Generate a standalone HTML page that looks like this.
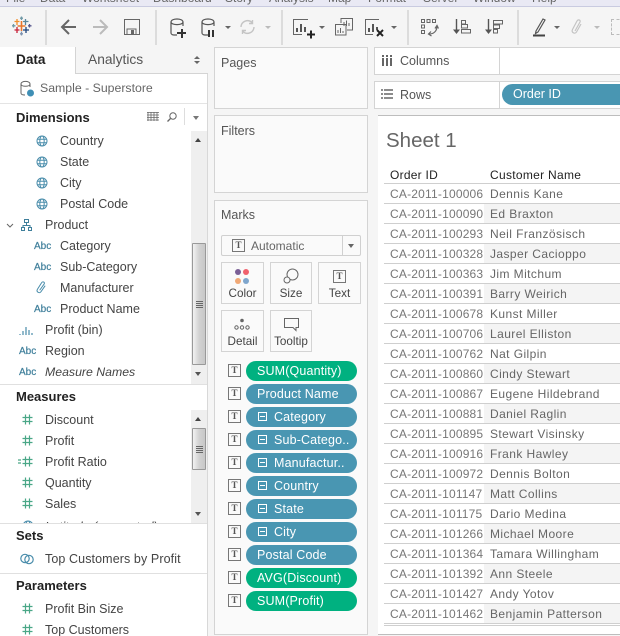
<!DOCTYPE html>
<html><head><meta charset="utf-8">
<style>
html,body{margin:0;padding:0;width:620px;height:636px;overflow:hidden;background:#f5f5f5}
body{position:relative;font-family:"Liberation Sans",sans-serif;font-size:12.5px;color:#444}
.a{position:absolute}
.t{position:absolute;white-space:nowrap;line-height:16px;height:16px}
.b{font-weight:bold;color:#222;font-size:13px}
.card{position:absolute;background:#fafafa;border:1px solid #d4d4d4;box-sizing:border-box}
.sep{position:absolute;top:10px;width:2px;height:35px;background:#dcdcdc}
.pill{position:absolute;left:246px;width:111px;height:20px;border-radius:10px;background:#4996b2;color:#fff;line-height:20px;font-size:12.5px;letter-spacing:.15px;white-space:nowrap;overflow:hidden;box-sizing:border-box;padding-left:11px}
.g{background:#00b180}
.m{padding-left:28px}
.m:before{content:"";position:absolute;left:12px;top:5px;width:9px;height:9px;border:1px solid #fff;box-sizing:border-box;background:linear-gradient(#fff,#fff) center/5px 1px no-repeat}
.tb{position:absolute;left:228px;width:13px;height:13px;border:1px solid #777;box-sizing:border-box;font:bold 9px/11px "Liberation Serif",serif;text-align:center;color:#555}
.btn{position:absolute;width:43px;height:42px;border:1px solid #d4d4d4;box-sizing:border-box;background:#fafafa}
.btn span{position:absolute;left:0;right:0;top:23px;text-align:center;font-size:11.7px;line-height:16px;color:#444}
.ln{position:absolute;left:384px;width:236px;height:1px;background:#cfcfcf}
.sh{position:absolute;left:484px;width:136px;height:19px;background:#f4f4f4}
.r{position:absolute;white-space:nowrap;font-size:12px;letter-spacing:.2px;line-height:16px;color:#777}
.n{color:#666;letter-spacing:.42px}
.abc{position:absolute;font-size:10px;color:#3f7f9b;line-height:12px;-webkit-text-stroke:.2px #3f7f9b}
.ic{position:absolute;overflow:visible}
.sb{position:absolute;left:191px;width:16px;background:#efefef}
.th{position:absolute;left:192px;width:14px;box-sizing:border-box;border:1px solid #999;border-radius:1px;background:linear-gradient(90deg,#f2f2f2,#d2d2d2 50%,#c8c8c8)}
.grip{position:absolute;left:3px;width:7px;height:1px;background:#666;box-shadow:0 2px #666,0 4px #666,0 6px #666}
.up,.dn{position:absolute;left:195px;width:0;height:0;border-left:3.5px solid transparent;border-right:3.5px solid transparent}
.up{border-bottom:4px solid #444}.dn{border-top:4px solid #555}
.car{position:absolute;width:0;height:0;border-left:3px solid transparent;border-right:3px solid transparent;border-top:3px solid #666;top:26px}
.car.off{border-top-color:#bbb}
.mn{position:absolute;top:-10px;font-size:12px;line-height:16px;color:#666;white-space:nowrap}
</style></head><body>
<svg width="0" height="0" style="position:absolute"><defs>
<symbol id="globe" viewBox="0 0 12 12"><g fill="none" stroke="#4a8dab" stroke-width="1"><circle cx="6" cy="6" r="5"/><ellipse cx="6" cy="6" rx="2.2" ry="5"/><path d="M1 4.2h10M1 7.8h10"/></g></symbol>
<symbol id="hash" viewBox="0 0 11 11"><path d="M3.5 0.5v10M7.5 0.5v10M0.5 3.5h10M0.5 7.5h10" stroke="#4aa787" stroke-width="1.2" fill="none"/></symbol>
<symbol id="db" viewBox="0 0 16 20"><path d="M1 4v11c0 1.5 2 2 3 2h3M13 4v4M1 4c0-4 12-4 12 0c0 3.500-12 3.500-12 0z" fill="none" stroke="#555" stroke-width="1.200"/></symbol>
</defs></svg>

<!-- menu -->
<div class="a" style="left:0;top:0;width:620px;height:6px;background:#e9e9f4;overflow:hidden;border-bottom:1px solid #c9cbe0">
<span class="mn" style="left:6px">File</span><span class="mn" style="left:40px">Data</span><span class="mn" style="left:82px">Worksheet</span><span class="mn" style="left:153px">Dashboard</span><span class="mn" style="left:225px">Story</span><span class="mn" style="left:269px">Analysis</span><span class="mn" style="left:328px">Map</span><span class="mn" style="left:368px">Format</span><span class="mn" style="left:423px">Server</span><span class="mn" style="left:473px">Window</span><span class="mn" style="left:532px">Help</span></div>

<!-- toolbar -->
<svg class="ic" style="left:12px;top:16px" width="20" height="20" viewBox="0 0 20 20"><g fill="none" stroke-width="1.300"><path d="M9.500 5v10M5.500 10h8" stroke="#e8762c" stroke-width="1.600"/><path d="M5 3v6M2.500 5.500h5" stroke="#f28e2b"/><path d="M13.500 3v6M11 5.500h5.500" stroke="#5b879b"/><path d="M5 11v6M2.500 14h5" stroke="#c72037"/><path d="M14 11v6M11 14h6" stroke="#1f447b"/><path d="M9.500 .5v3.500M8 2.200h3" stroke="#7099a6"/><path d="M9.500 15.500v4M8 17.800h3" stroke="#7e93b0"/><path d="M1.500 8v3.500M0 9.800h3.500" stroke="#7099a6"/><path d="M17.500 8v3.500M16 9.800h3.500" stroke="#59598f"/></g></svg>
<div class="sep" style="left:45px"></div>
<svg class="ic" style="left:60px;top:18px" width="17" height="18" viewBox="0 0 17 18"><path d="M16 9H2M9 2L2 9l7 7" fill="none" stroke="#666" stroke-width="2"/></svg>
<svg class="ic" style="left:92px;top:18px" width="17" height="18" viewBox="0 0 17 18"><path d="M1 9h14M8 2l7 7-7 7" fill="none" stroke="#bbb" stroke-width="2"/></svg>
<svg class="ic" style="left:124px;top:19px" width="16" height="16" viewBox="0 0 16 16"><path d="M.5.500h15v15H.5zM3 15V10h9v5" fill="none" stroke="#666"/><rect x="7" y="11" width="3" height="4" fill="#666"/></svg>
<div class="sep" style="left:155px"></div>
<svg class="ic" style="left:170px;top:18px" width="16" height="20"><use href="#db" width="16" height="20"/></svg><div class="a" style="left:177px;top:32px;width:9px;height:2px;background:#333"></div><div class="a" style="left:180.500px;top:28.500px;width:2px;height:9px;background:#333"></div>
<svg class="ic" style="left:201px;top:18px" width="16" height="20"><use href="#db" width="16" height="20"/></svg><div class="a" style="left:208px;top:30px;width:2px;height:7px;background:#333"></div><div class="a" style="left:212px;top:30px;width:2px;height:7px;background:#333"></div>
<div class="car" style="left:225px"></div>
<svg class="ic" style="left:239px;top:19px" width="17" height="16" viewBox="0 0 17 16"><path d="M2 8a6.500 6.500 0 0 1 11-4.500M15 8a6.500 6.500 0 0 1-11 4.500M13.500 1v3.500H10M3.500 15v-3.500H7" fill="none" stroke="#c4c4c4" stroke-width="1.400"/></svg>
<div class="car off" style="left:265px"></div>
<div class="sep" style="left:281px"></div>
<svg class="ic" style="left:293px;top:19px" width="22" height="20" viewBox="0 0 22 20"><path d="M15 .5H.5v15H9" fill="none" stroke="#666"/><path d="M4 9v4M8 5v8M12 8v5" stroke="#555" stroke-width="2"/><path d="M14 15.500h8M18 11.500v8" stroke="#222" stroke-width="2"/></svg>
<div class="car" style="left:319px"></div>
<svg class="ic" style="left:335px;top:18px" width="18" height="18" viewBox="0 0 18 18"><path d="M6 5V.5h11.500V12H12M.5 6.500H11V17H.5z" fill="none" stroke="#666"/><path d="M9 8V4M11.500 8V2.500M14 8V5M3 15v-3M5.500 15v-5M8 15v-2" stroke="#666"/></svg>
<svg class="ic" style="left:365px;top:19px" width="20" height="19" viewBox="0 0 20 19"><path d="M14 .5H.5v15H8" fill="none" stroke="#666"/><path d="M4 9v4M8 5v8M12 8v3" stroke="#555" stroke-width="2"/><path d="M12 11l6 6M18 11l-6 6" stroke="#222" stroke-width="2"/></svg>
<div class="car" style="left:391px"></div>
<div class="sep" style="left:407px"></div>
<svg class="ic" style="left:421px;top:19px" width="18" height="18" viewBox="0 0 18 18" fill="none" stroke="#666"><path d="M.5.500h3v3h-3zM6 .5h3v3H6zM11.500.5h3v3h-3zM.5 6h3v3h-3zM.5 11.500h3v3h-3z"/><path d="M16 7c0 5-3 8-8 8M10 12.500L7.500 15l3 2M14 9.500l2-3 1.500 3" stroke-width="1.200"/></svg>
<svg class="ic" style="left:453px;top:19px" width="18" height="16" viewBox="0 0 18 16"><path d="M3.500 0v13" stroke="#555" stroke-width="1.400"/><path d="M0 10.500h7l-3.500 4.500z" fill="#555"/><path d="M8.500 1.500h4v3.500h-4zM8.500 5.500h6v3.500h-6zM8.500 10.500h9v3.500h-9z" fill="none" stroke="#666"/></svg>
<svg class="ic" style="left:485px;top:19px" width="18" height="16" viewBox="0 0 18 16"><path d="M3.500 0v13" stroke="#555" stroke-width="1.400"/><path d="M0 10.500h7l-3.500 4.500z" fill="#555"/><path d="M8.500 1.500h9v3.500h-9zM8.500 6h6v3.500h-6zM8.500 10.500h4v3.500h-4z" fill="none" stroke="#666"/></svg>
<div class="sep" style="left:517px"></div>
<svg class="ic" style="left:533px;top:18px" width="14" height="19" viewBox="0 0 14 19"><path d="M3 13L10 1l2 1-7 12-2.500 1.500z" fill="none" stroke="#555" stroke-width="1.200"/><path d="M0 17.500h12" stroke="#444" stroke-width="2"/></svg>
<div class="car" style="left:554px"></div>
<svg class="ic" style="left:571px;top:19px" width="12" height="16" viewBox="0 0 12 16"><path d="M4 12l5-9c1-2-2-3-3-1L1.500 10.500c-1.500 3 2.500 5 4 2.500L10 5" fill="none" stroke="#c4c4c4" stroke-width="1.200"/></svg>
<div class="car off" style="left:594px"></div>
<div class="a" style="left:611px;top:19px;width:12px;height:14px;border:1px dashed #bbb"></div>

<!-- data pane -->
<div class="a" style="left:0;top:47px;width:207px;height:589px;background:#fff"></div>
<div class="a" style="left:207px;top:47px;width:1px;height:589px;background:#d8d8d8"></div>
<div class="a" style="left:75px;top:47px;width:132px;height:26px;background:#f5f5f5;border-left:1px solid #d4d4d4;border-bottom:1px solid #d4d4d4;box-sizing:content-box"></div>
<div class="t" style="left:16px;top:52px;font-weight:bold;font-size:13.6px;color:#222">Data</div>
<div class="t" style="left:88px;top:52px;font-size:13.8px;color:#555">Analytics</div>
<div class="a" style="left:194px;top:56px;width:0;height:0;border-left:3px solid transparent;border-right:3px solid transparent;border-bottom:3px solid #666"></div>
<div class="a" style="left:194px;top:61px;width:0;height:0;border-left:3px solid transparent;border-right:3px solid transparent;border-top:3px solid #666"></div>
<svg class="ic" style="left:20px;top:80px" width="15" height="18" viewBox="0 0 15 18"><path d="M1 4v9c0 1.500 1 2 4 2M10 4v3M1 4c0-3.500 9-3.500 9 0c0 3-9 3-9 0z" fill="none" stroke="#666"/><circle cx="10.500" cy="13" r="3.500" fill="#3f8fb5"/></svg>
<div class="t" style="left:40px;top:80px;color:#666;font-size:12.3px">Sample - Superstore</div>
<div class="a" style="left:0;top:103px;width:207px;height:1px;background:#e4e4e4"></div>

<div class="t b" style="left:16px;top:110px">Dimensions</div>
<svg class="ic" style="left:147px;top:112px" width="12" height="10" viewBox="0 0 12 10"><path d="M0 .5h12M0 3h12M0 5.500h12M0 8h12M1 0v9M4 0v9M7 0v9M10 0v9" stroke="#666" stroke-width=".8" fill="none"/></svg>
<svg class="ic" style="left:167px;top:112px" width="10" height="10" viewBox="0 0 10 10"><circle cx="6" cy="4" r="3.200" fill="none" stroke="#666"/><path d="M3.500 6.500L.5 9.500" stroke="#666" stroke-width="1.300"/></svg>
<div class="a" style="left:184px;top:108px;width:1px;height:17px;background:#ddd"></div>
<div class="a" style="left:193px;top:116px;width:0;height:0;border-left:3.500px solid transparent;border-right:3.500px solid transparent;border-top:4px solid #777"></div>

<div class="sb" style="top:131px;height:253px"></div>
<div class="up" style="top:138px"></div>
<div class="th" style="top:243px;height:122px"><div class="grip" style="top:57px"></div></div>
<div class="dn" style="top:372px"></div>

<svg class="ic" style="left:36px;top:135px" width="12" height="12"><use href="#globe" width="12" height="12"/></svg><div class="t" style="left:60px;top:133px">Country</div>
<svg class="ic" style="left:36px;top:156px" width="12" height="12"><use href="#globe" width="12" height="12"/></svg><div class="t" style="left:60px;top:154px">State</div>
<svg class="ic" style="left:36px;top:177px" width="12" height="12"><use href="#globe" width="12" height="12"/></svg><div class="t" style="left:60px;top:175px">City</div>
<svg class="ic" style="left:36px;top:198px" width="12" height="12"><use href="#globe" width="12" height="12"/></svg><div class="t" style="left:60px;top:196px">Postal Code</div>
<svg class="ic" style="left:6px;top:223px" width="8" height="5" viewBox="0 0 8 5"><path d="M1 1l3 3 3-3" fill="none" stroke="#666"/></svg>
<svg class="ic" style="left:21px;top:219px" width="11" height="12" viewBox="0 0 11 12"><path d="M3.500.5h4v3h-4zM.5 8.500h3v3h-3zM7.500 8.500h3v3h-3zM5.500 3.500v3M2 8.500v-2h7v2" fill="none" stroke="#3f7f9b"/></svg><div class="t" style="left:45px;top:217px">Product</div>
<div class="abc" style="left:34px;top:241px">Abc</div><div class="t" style="left:60px;top:238px">Category</div>
<div class="abc" style="left:34px;top:262px">Abc</div><div class="t" style="left:60px;top:259px">Sub-Category</div>
<svg class="ic" style="left:36px;top:281px" width="11" height="13" viewBox="0 0 12 14"><path d="M4 10l5-7c1-2-2-3-3-1L1.500 9c-1.500 3 2.500 5 4 2.500L10 5" fill="none" stroke="#4a8dab" stroke-width="1.100"/></svg><div class="t" style="left:60px;top:280px">Manufacturer</div>
<div class="abc" style="left:34px;top:304px">Abc</div><div class="t" style="left:60px;top:301px">Product Name</div>
<svg class="ic" style="left:19px;top:326px" width="15" height="9" viewBox="0 0 15 9"><path d="M1 8v1M4 5v4M7 1v8M10 4v5M13 7v2" stroke="#4a8dab" stroke-width="1.200"/></svg><div class="t" style="left:45px;top:322px">Profit (bin)</div>
<div class="abc" style="left:19px;top:346px">Abc</div><div class="t" style="left:45px;top:343px">Region</div>
<div class="abc" style="left:19px;top:367px">Abc</div><div class="t" style="left:45px;top:364px;font-style:italic;font-size:12.3px">Measure Names</div>
<div class="a" style="left:0;top:384px;width:207px;height:1px;background:#e0e0e0"></div>

<div class="t b" style="left:16px;top:389px">Measures</div>
<div class="sb" style="top:410px;height:113px"></div>
<div class="up" style="top:417px"></div>
<div class="th" style="top:428px;height:42px"><div class="grip" style="top:17px"></div></div>
<div class="dn" style="top:512px"></div>
<svg class="ic" style="left:22px;top:414px" width="11" height="11"><use href="#hash" width="11" height="11"/></svg><div class="t" style="left:45px;top:412px">Discount</div>
<svg class="ic" style="left:22px;top:435px" width="11" height="11"><use href="#hash" width="11" height="11"/></svg><div class="t" style="left:45px;top:433px">Profit</div>
<svg class="ic" style="left:18px;top:456px" width="15" height="11" viewBox="0 0 15 11"><path d="M0 4h3M0 7h3M7.500.5v10M11.500.5v10M4.500 3.500h10M4.500 7.500h10" stroke="#4aa787" stroke-width="1.200" fill="none"/></svg><div class="t" style="left:45px;top:454px">Profit Ratio</div>
<svg class="ic" style="left:22px;top:477px" width="11" height="11"><use href="#hash" width="11" height="11"/></svg><div class="t" style="left:45px;top:475px">Quantity</div>
<svg class="ic" style="left:22px;top:498px" width="11" height="11"><use href="#hash" width="11" height="11"/></svg><div class="t" style="left:45px;top:496px">Sales</div>
<div class="a" style="left:0;top:518px;width:190px;height:5px;overflow:hidden"><div class="t" style="left:45px;top:1px;font-style:italic">Latitude (generated)</div><svg class="ic" style="left:22px;top:2px" width="12" height="12"><use href="#globe" width="12" height="12"/></svg></div>
<div class="a" style="left:0;top:523px;width:207px;height:1px;background:#e0e0e0"></div>

<div class="t b" style="left:16px;top:528px">Sets</div>
<svg class="ic" style="left:20px;top:553px" width="14" height="12" viewBox="0 0 14 12"><circle cx="5" cy="5.500" r="4.200" fill="none" stroke="#4a8dab" stroke-width="1.200"/><circle cx="9" cy="6.500" r="4.200" fill="none" stroke="#4a8dab" stroke-width="1.200"/></svg><div class="t" style="left:45px;top:551px;letter-spacing:.1px">Top Customers by Profit</div>
<div class="a" style="left:0;top:573px;width:207px;height:1px;background:#e0e0e0"></div>

<div class="t b" style="left:16px;top:578px">Parameters</div>
<svg class="ic" style="left:22px;top:603px" width="11" height="11"><use href="#hash" width="11" height="11"/></svg><div class="t" style="left:45px;top:601px">Profit Bin Size</div>
<svg class="ic" style="left:22px;top:624px" width="11" height="11"><use href="#hash" width="11" height="11"/></svg><div class="t" style="left:45px;top:622px">Top Customers</div>

<!-- cards -->
<div class="card" style="left:214px;top:47px;width:154px;height:62px"></div>
<div class="t" style="left:221px;top:55px;color:#555">Pages</div>
<div class="card" style="left:214px;top:115px;width:154px;height:78px"></div>
<div class="t" style="left:221px;top:123px;color:#555">Filters</div>
<div class="card" style="left:214px;top:200px;width:154px;height:435px"></div>
<div class="t" style="left:221px;top:207px;color:#555">Marks</div>

<div class="a" style="left:221px;top:235px;width:140px;height:21px;border:1px solid #d0d0d0;border-radius:2px;box-sizing:border-box;background:#fafafa"></div>
<div class="a" style="left:342px;top:236px;width:1px;height:19px;background:#d0d0d0"></div>
<div class="tb" style="left:232px;top:239px">T</div>
<div class="t" style="left:251px;top:238px;font-size:12px;color:#666">Automatic</div>
<div class="a" style="left:348px;top:244px;width:0;height:0;border-left:3.500px solid transparent;border-right:3.500px solid transparent;border-top:4px solid #666"></div>

<div class="btn" style="left:221px;top:262px"><span>Color</span></div>
<div class="a" style="left:235px;top:269px;width:6px;height:6px;border-radius:50%;background:#7a5f96"></div>
<div class="a" style="left:243px;top:269px;width:6px;height:6px;border-radius:50%;background:#f0616d"></div>
<div class="a" style="left:235px;top:278px;width:6px;height:6px;border-radius:50%;background:#f0a875"></div>
<div class="a" style="left:243px;top:278px;width:6px;height:6px;border-radius:50%;background:#7fa6cd"></div>
<div class="btn" style="left:270px;top:262px;width:42px"><span>Size</span></div>
<svg class="ic" style="left:283px;top:268px" width="16" height="16" viewBox="0 0 16 16"><circle cx="9.500" cy="6.500" r="5.500" fill="none" stroke="#666"/><circle cx="4" cy="12" r="3" fill="#fafafa" stroke="#666"/></svg>
<div class="btn" style="left:318px;top:262px"><span>Text</span></div>
<div class="tb" style="left:333px;top:270px">T</div>
<div class="btn" style="left:221px;top:310px"><span>Detail</span></div>
<svg class="ic" style="left:234px;top:318px" width="16" height="12" viewBox="0 0 16 12" fill="none" stroke="#666"><circle cx="8" cy="2.500" r="1.800" fill="#666" stroke="none"/><circle cx="2.500" cy="9.500" r="1.700"/><circle cx="8" cy="9.500" r="1.700"/><circle cx="13.500" cy="9.500" r="1.700"/></svg>
<div class="btn" style="left:270px;top:310px;width:42px"><span>Tooltip</span></div>
<svg class="ic" style="left:284px;top:318px" width="15" height="13" viewBox="0 0 15 13"><path d="M.5.500h14v9h-2.500V12.500l-3-3H.5z" fill="none" stroke="#666"/></svg>

<div class="tb" style="top:364px">T</div><div class="pill g" style="top:361px">SUM(Quantity)</div>
<div class="tb" style="top:387px">T</div><div class="pill" style="top:384px">Product Name</div>
<div class="tb" style="top:410px">T</div><div class="pill m" style="top:407px">Category</div>
<div class="tb" style="top:433px">T</div><div class="pill m" style="top:430px">Sub-Catego..</div>
<div class="tb" style="top:456px">T</div><div class="pill m" style="top:453px">Manufactur..</div>
<div class="tb" style="top:479px">T</div><div class="pill m" style="top:476px">Country</div>
<div class="tb" style="top:502px">T</div><div class="pill m" style="top:499px">State</div>
<div class="tb" style="top:525px">T</div><div class="pill m" style="top:522px">City</div>
<div class="tb" style="top:548px">T</div><div class="pill" style="top:545px">Postal Code</div>
<div class="tb" style="top:571px">T</div><div class="pill g" style="top:568px">AVG(Discount)</div>
<div class="tb" style="top:594px">T</div><div class="pill g" style="top:591px">SUM(Profit)</div>

<!-- shelves -->
<div class="card" style="left:374px;top:47px;width:250px;height:28px;background:#fff"></div>
<div class="a" style="left:499px;top:47px;width:1px;height:28px;background:#d4d4d4"></div>
<div class="a" style="left:382px;top:55px;width:2px;height:11px;background:#666;box-shadow:4px 0 #666,8px 0 #666"></div>
<div class="a" style="left:382px;top:57px;width:2px;height:1px;background:#fff;box-shadow:4px 0 #fff,8px 0 #fff"></div>
<div class="t" style="left:400px;top:53px;color:#555">Columns</div>
<div class="card" style="left:374px;top:81px;width:250px;height:28px;background:#fff"></div>
<div class="a" style="left:499px;top:81px;width:1px;height:28px;background:#d4d4d4"></div>
<svg class="ic" style="left:381px;top:89px" width="12" height="10" viewBox="0 0 12 10"><path d="M0 1h2M3 1h9M0 5h2M3 5h9M0 9h2M3 9h9" stroke="#666" stroke-width="1.500"/></svg>
<div class="t" style="left:400px;top:87px;color:#555">Rows</div>
<div class="a" style="left:502px;top:84px;width:130px;height:21px;border-radius:10.500px;background:#4996b2;color:#fff;line-height:21px;padding-left:11px;box-sizing:border-box">Order ID</div>

<!-- sheet -->
<div class="a" style="left:378px;top:115px;width:242px;height:520px;background:#fff;border-top:1px solid #bdbdbd;border-bottom:1px solid #bdbdbd;box-sizing:border-box"></div>
<div class="t" style="left:386px;top:129px;height:24px;line-height:24px;font-size:20.5px;color:#666">Sheet 1</div>
<div class="t" style="left:390px;top:167px;font-size:12px;color:#222;letter-spacing:.25px">Order ID</div>
<div class="t" style="left:490px;top:167px;font-size:12px;color:#222;letter-spacing:.3px">Customer Name</div>

<div class="sh" style="top:204px"></div><div class="sh" style="top:244px"></div><div class="sh" style="top:284px"></div><div class="sh" style="top:324px"></div><div class="sh" style="top:364px"></div><div class="sh" style="top:404px"></div><div class="sh" style="top:444px"></div><div class="sh" style="top:484px"></div><div class="sh" style="top:524px"></div><div class="sh" style="top:564px"></div><div class="sh" style="top:604px"></div>
<div class="ln" style="top:183px"></div><div class="ln" style="top:203px"></div><div class="ln" style="top:223px"></div><div class="ln" style="top:243px"></div><div class="ln" style="top:263px"></div><div class="ln" style="top:283px"></div><div class="ln" style="top:303px"></div><div class="ln" style="top:323px"></div><div class="ln" style="top:343px"></div><div class="ln" style="top:363px"></div><div class="ln" style="top:383px"></div><div class="ln" style="top:403px"></div><div class="ln" style="top:423px"></div><div class="ln" style="top:443px"></div><div class="ln" style="top:463px"></div><div class="ln" style="top:483px"></div><div class="ln" style="top:503px"></div><div class="ln" style="top:523px"></div><div class="ln" style="top:543px"></div><div class="ln" style="top:563px"></div><div class="ln" style="top:583px"></div><div class="ln" style="top:603px"></div><div class="ln" style="top:623px"></div><div class="ln" style="top:625px"></div>

<div class="r" style="left:390px;top:186px">CA-2011-100006</div><div class="r n" style="left:490px;top:186px">Dennis Kane</div>
<div class="r" style="left:390px;top:206px">CA-2011-100090</div><div class="r n" style="left:490px;top:206px">Ed Braxton</div>
<div class="r" style="left:390px;top:226px">CA-2011-100293</div><div class="r n" style="left:490px;top:226px">Neil Französisch</div>
<div class="r" style="left:390px;top:246px">CA-2011-100328</div><div class="r n" style="left:490px;top:246px">Jasper Cacioppo</div>
<div class="r" style="left:390px;top:266px">CA-2011-100363</div><div class="r n" style="left:490px;top:266px">Jim Mitchum</div>
<div class="r" style="left:390px;top:286px">CA-2011-100391</div><div class="r n" style="left:490px;top:286px">Barry Weirich</div>
<div class="r" style="left:390px;top:306px">CA-2011-100678</div><div class="r n" style="left:490px;top:306px">Kunst Miller</div>
<div class="r" style="left:390px;top:326px">CA-2011-100706</div><div class="r n" style="left:490px;top:326px">Laurel Elliston</div>
<div class="r" style="left:390px;top:346px">CA-2011-100762</div><div class="r n" style="left:490px;top:346px">Nat Gilpin</div>
<div class="r" style="left:390px;top:366px">CA-2011-100860</div><div class="r n" style="left:490px;top:366px">Cindy Stewart</div>
<div class="r" style="left:390px;top:386px">CA-2011-100867</div><div class="r n" style="left:490px;top:386px">Eugene Hildebrand</div>
<div class="r" style="left:390px;top:406px">CA-2011-100881</div><div class="r n" style="left:490px;top:406px">Daniel Raglin</div>
<div class="r" style="left:390px;top:426px">CA-2011-100895</div><div class="r n" style="left:490px;top:426px">Stewart Visinsky</div>
<div class="r" style="left:390px;top:446px">CA-2011-100916</div><div class="r n" style="left:490px;top:446px">Frank Hawley</div>
<div class="r" style="left:390px;top:466px">CA-2011-100972</div><div class="r n" style="left:490px;top:466px">Dennis Bolton</div>
<div class="r" style="left:390px;top:486px">CA-2011-101147</div><div class="r n" style="left:490px;top:486px">Matt Collins</div>
<div class="r" style="left:390px;top:506px">CA-2011-101175</div><div class="r n" style="left:490px;top:506px">Dario Medina</div>
<div class="r" style="left:390px;top:526px">CA-2011-101266</div><div class="r n" style="left:490px;top:526px">Michael Moore</div>
<div class="r" style="left:390px;top:546px">CA-2011-101364</div><div class="r n" style="left:490px;top:546px">Tamara Willingham</div>
<div class="r" style="left:390px;top:566px">CA-2011-101392</div><div class="r n" style="left:490px;top:566px">Ann Steele</div>
<div class="r" style="left:390px;top:586px">CA-2011-101427</div><div class="r n" style="left:490px;top:586px">Andy Yotov</div>
<div class="r" style="left:390px;top:606px">CA-2011-101462</div><div class="r n" style="left:490px;top:606px">Benjamin Patterson</div>
</body></html>
